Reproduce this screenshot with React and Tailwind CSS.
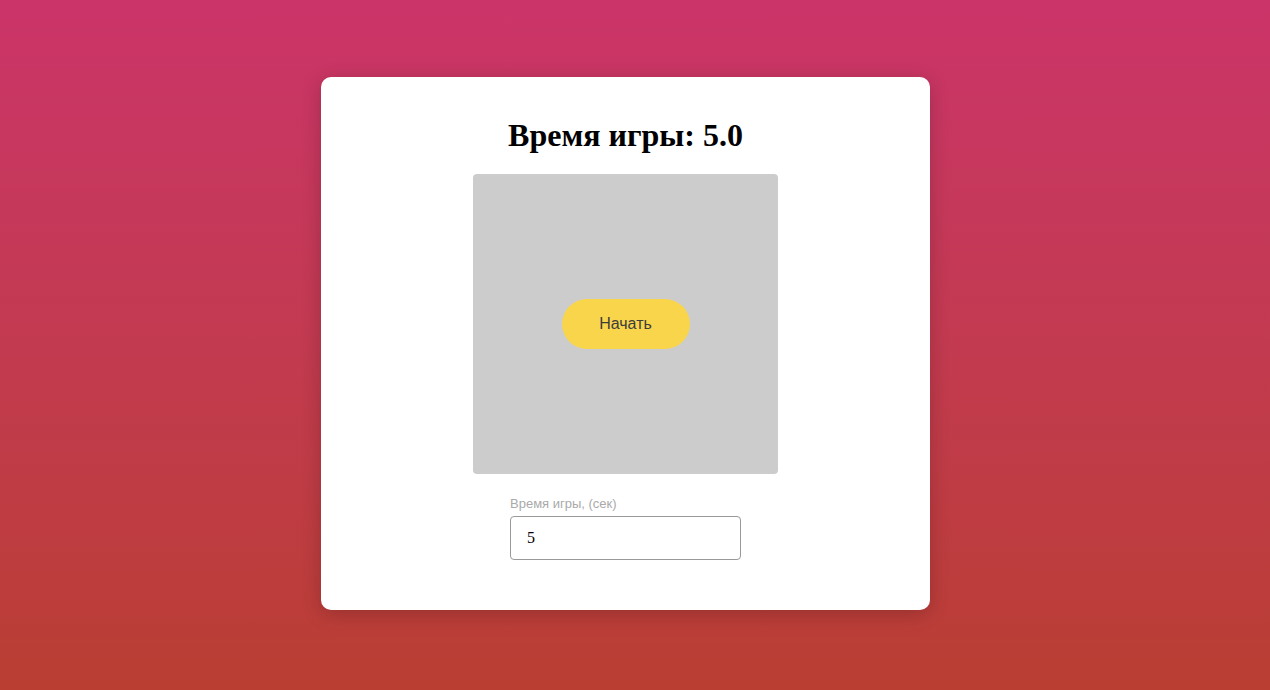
import React, { useState } from 'react';

// Timer-configured clicker game: the board, its start button and the length setting
export default function App() {
  const [seconds, setSeconds] = useState('5');
  const shown = Number(seconds || 0).toFixed(1);

  return (
    <div className="min-h-[690px] w-full bg-gradient-to-b from-[#cb3469] to-[#ba3e32] flex justify-center pt-[77px] pr-[19px]">
      <div className="w-[609px] h-[533px] bg-white rounded-[10px] shadow-[0_4px_20px_rgba(0,0,0,0.2)] flex flex-col items-center pt-[40px]">
        <h1 className="text-[32px] leading-[37px] font-bold text-black font-['Liberation_Serif',serif]">
          Время игры: {shown}
        </h1>

        <div className="mt-[20px] w-[305px] h-[300px] bg-[#cccccc] rounded-[4px] flex items-center justify-center">
          <button className="w-[128px] h-[50px] rounded-full bg-[#f9d54c] text-[16px] text-[#3d3d3d] font-['Liberation_Sans',Arial,sans-serif]">
            Начать
          </button>
        </div>

        <div className="mt-[22px] w-[231px] flex flex-col">
          <label className="text-[13px] leading-[16px] text-[#aaaaaa] font-['Liberation_Sans',Arial,sans-serif] mb-[4px]">
            Время игры, (сек)
          </label>
          <input
            type="number"
            value={seconds}
            onChange={e => setSeconds(e.target.value)}
            className="h-[44px] w-full border border-[#999999] rounded-[4px] px-[16px] text-[16px] text-black font-['Liberation_Serif',serif] outline-none [appearance:textfield] [&::-webkit-inner-spin-button]:appearance-none"
          />
        </div>
      </div>
    </div>
  );
}
